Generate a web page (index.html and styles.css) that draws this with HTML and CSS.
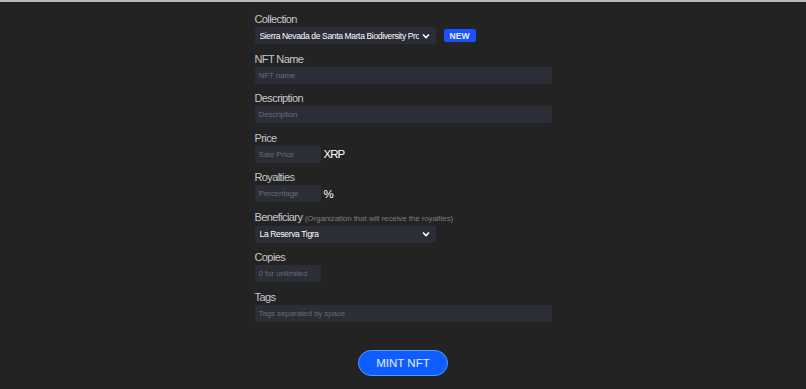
FILE: index.html
```html
<!DOCTYPE html>
<html lang="en">
<head>
    <meta charset="UTF-8">
    <meta name="viewport" content="width=device-width, initial-scale=1.0">
    <title>Mint NFT</title>
    <link rel="stylesheet" href="styles.css">
</head>
<body>
    <div class="topbar"></div>
    <form class="mint-form">
        <div class="field">
            <label class="label">Collection</label>
            <div class="row">
                <div class="select">
                    <span>Sierra Nevada de Santa Marta Biodiversity Pro</span>
                    <svg class="chevron" width="8" height="6" viewBox="0 0 8 6"><path d="M1 1.5 L4 4.5 L7 1.5" fill="none" stroke="#fff" stroke-width="1.6"/></svg>
                </div>
                <button type="button" class="new-button">NEW</button>
            </div>
        </div>

        <div class="field">
            <label class="label">NFT Name</label>
            <input type="text" class="input" placeholder="NFT name">
        </div>

        <div class="field">
            <label class="label">Description</label>
            <input type="text" class="input" placeholder="Description">
        </div>

        <div class="field">
            <label class="label">Price</label>
            <div class="row">
                <input type="text" class="input input-small" placeholder="Sale Price">
                <span class="unit">XRP</span>
            </div>
        </div>

        <div class="field">
            <label class="label">Royalties</label>
            <div class="row">
                <input type="text" class="input input-small" placeholder="Percentage">
                <span class="unit">%</span>
            </div>
        </div>

        <div class="field">
            <label class="label">Beneficiary <small class="hint">(Organization that will receive the royalties)</small></label>
            <div class="select">
                <span>La Reserva Tigra</span>
                <svg class="chevron" width="8" height="6" viewBox="0 0 8 6"><path d="M1 1.5 L4 4.5 L7 1.5" fill="none" stroke="#fff" stroke-width="1.6"/></svg>
            </div>
        </div>

        <div class="field">
            <label class="label">Copies</label>
            <input type="text" class="input input-small" placeholder="0 for unlimited">
        </div>

        <div class="field">
            <label class="label">Tags</label>
            <input type="text" class="input" placeholder="Tags separated by space">
        </div>

        <div class="actions">
            <button type="button" class="mint-button">MINT NFT</button>
        </div>
    </form>
</body>
</html>
```

FILE: styles.css
```css
* {
    margin: 0;
    padding: 0;
    box-sizing: border-box;
}

body {
    font-family: 'Liberation Sans', Arial, sans-serif;
    background: #232323;
    min-height: 100vh;
}

.topbar {
    height: 2px;
    background: #b9b9b9;
}

.mint-form {
    width: 297px;
    margin: 0 auto;
    padding-top: 10px;
}

.field {
    margin-bottom: 7.5px;
}

.label {
    display: block;
    color: #c6c6d0;
    font-size: 11px;
    line-height: 15px;
    letter-spacing: -0.6px;
}

.hint {
    color: #7a7a84;
    font-size: 8px;
    letter-spacing: -0.1px;
}

.row {
    display: flex;
    align-items: center;
}

.select {
    width: 181px;
    height: 17px;
    background: #2b2d37;
    border-radius: 2px;
    color: #fff;
    font-size: 8.5px;
    letter-spacing: -0.35px;
    display: flex;
    align-items: center;
    justify-content: space-between;
    padding: 0 6px 0 5px;
}

.select span {
    white-space: nowrap;
    overflow: hidden;
}

.chevron {
    flex-shrink: 0;
    margin-left: 3px;
}

.new-button {
    margin-left: 8px;
    background: #1a50ff;
    color: #e8eeff;
    border: none;
    border-radius: 2px;
    font-family: inherit;
    font-size: 8.5px;
    font-weight: bold;
    width: 32px;
    height: 13px;
}

.input {
    display: block;
    width: 100%;
    height: 17px;
    background: #2b2d37;
    border: none;
    border-radius: 2px;
    color: #fff;
    font-family: inherit;
    font-size: 8px;
    letter-spacing: -0.1px;
    padding: 0 4px;
    outline: none;
}

.input::placeholder {
    color: #6a6c75;
}

.input-small {
    width: 66px;
}

.unit {
    color: #fff;
    font-size: 11.5px;
    letter-spacing: -1px;
    margin-left: 3px;
}

.actions {
    display: flex;
    justify-content: center;
    padding-top: 21px;
}

.mint-button {
    width: 90px;
    height: 26px;
    background: #0f5cff;
    border: 1px solid #46a0ff;
    border-radius: 13px;
    color: #e6ecff;
    font-family: inherit;
    font-size: 11.5px;
}
```
